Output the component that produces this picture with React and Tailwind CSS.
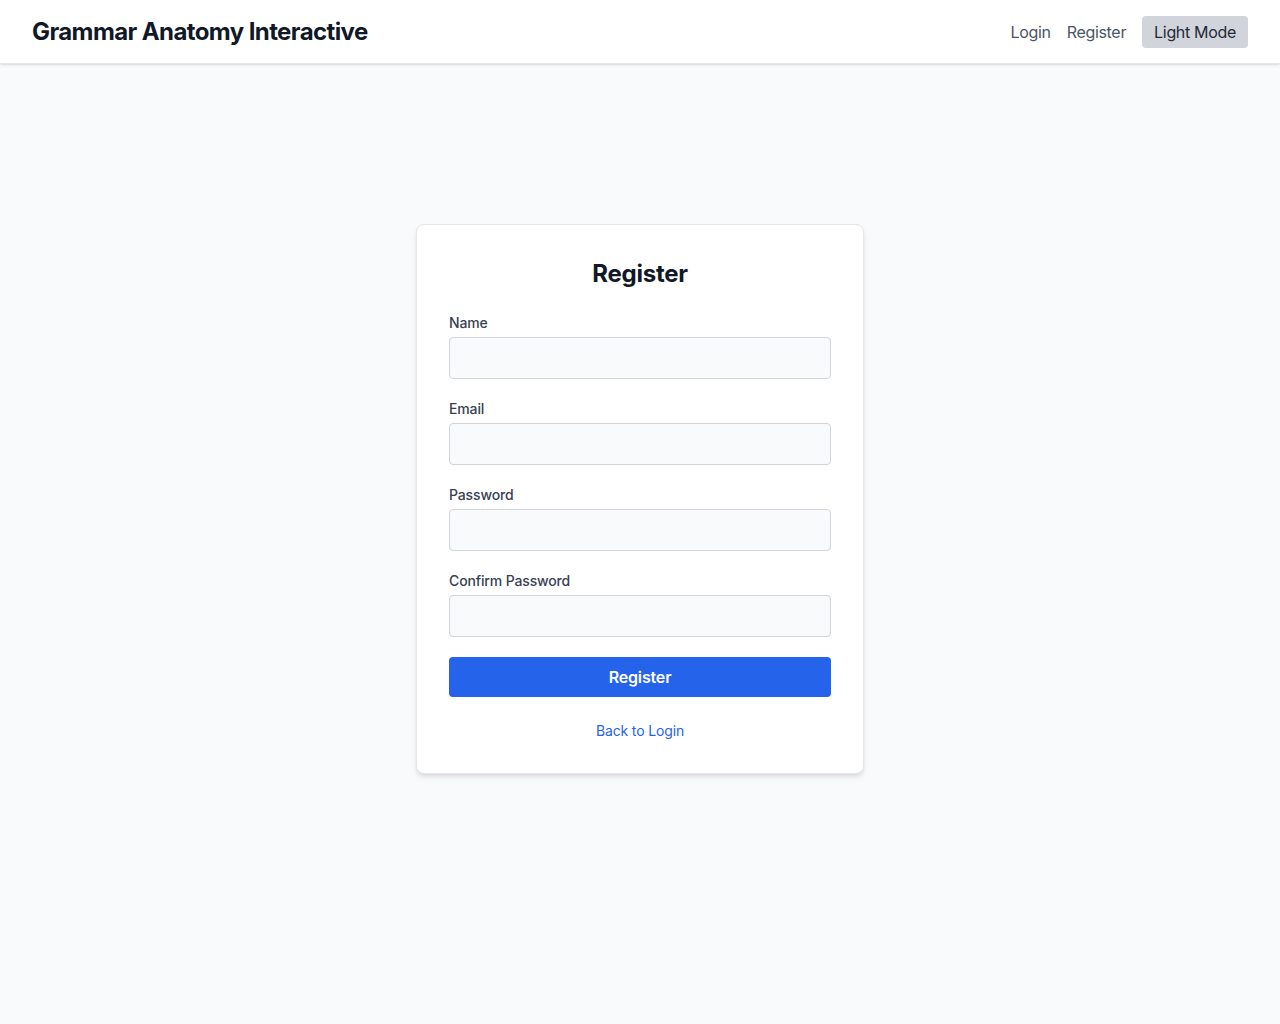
import React from 'react';

const fields = [
  { label: 'Name', type: 'text' },
  { label: 'Email', type: 'email' },
  { label: 'Password', type: 'password' },
  { label: 'Confirm Password', type: 'password' },
];

const App = () => {
  return (
    <div className="min-h-screen bg-[#f9fafb] font-['Inter',sans-serif]">
      {/* Header */}
      <header className="h-16 bg-white border-b border-[#e5e7eb] shadow-sm px-8 flex items-center justify-between">
        <h1 className="text-2xl font-bold text-[#111827] tracking-[-0.025em]">Grammar Anatomy Interactive</h1>
        <nav className="flex items-center gap-4 tracking-[-0.02em]">
          <a href="#" className="text-base text-[#4b5563]">Login</a>
          <a href="#" className="text-base text-[#4b5563]">Register</a>
          <button className="h-8 px-3 rounded bg-[#d1d5db] text-base text-[#1f2937]">Light Mode</button>
        </nav>
      </header>

      {/* Register form */}
      <main className="flex justify-center pt-40">
        <div className="w-[448px] bg-white border border-[#e5e7eb] rounded-lg shadow-md p-8">
          <h2 className="text-2xl leading-8 font-bold text-[#111827] text-center pt-px mb-[23px] tracking-[-0.01em]">Register</h2>
          <form className="flex flex-col gap-5">
            {fields.map((field) => (
              <div key={field.label}>
                <label className="block text-sm font-medium text-[#374151] mb-1 tracking-[-0.01em]">{field.label}</label>
                <input
                  type={field.type}
                  className="block w-full px-3 py-2 text-base bg-[#f9fafb] border border-[#d1d5db] rounded"
                />
              </div>
            ))}
            <button type="button" className="w-full py-2 rounded bg-[#2563eb] text-white text-base font-semibold tracking-[-0.01em]">
              Register
            </button>
          </form>
          <div className="mt-6 text-center text-sm leading-5">
            <a href="#" className="text-[#2563eb] tracking-[-0.01em]">Back to Login</a>
          </div>
        </div>
      </main>
    </div>
  );
};

export default App;
